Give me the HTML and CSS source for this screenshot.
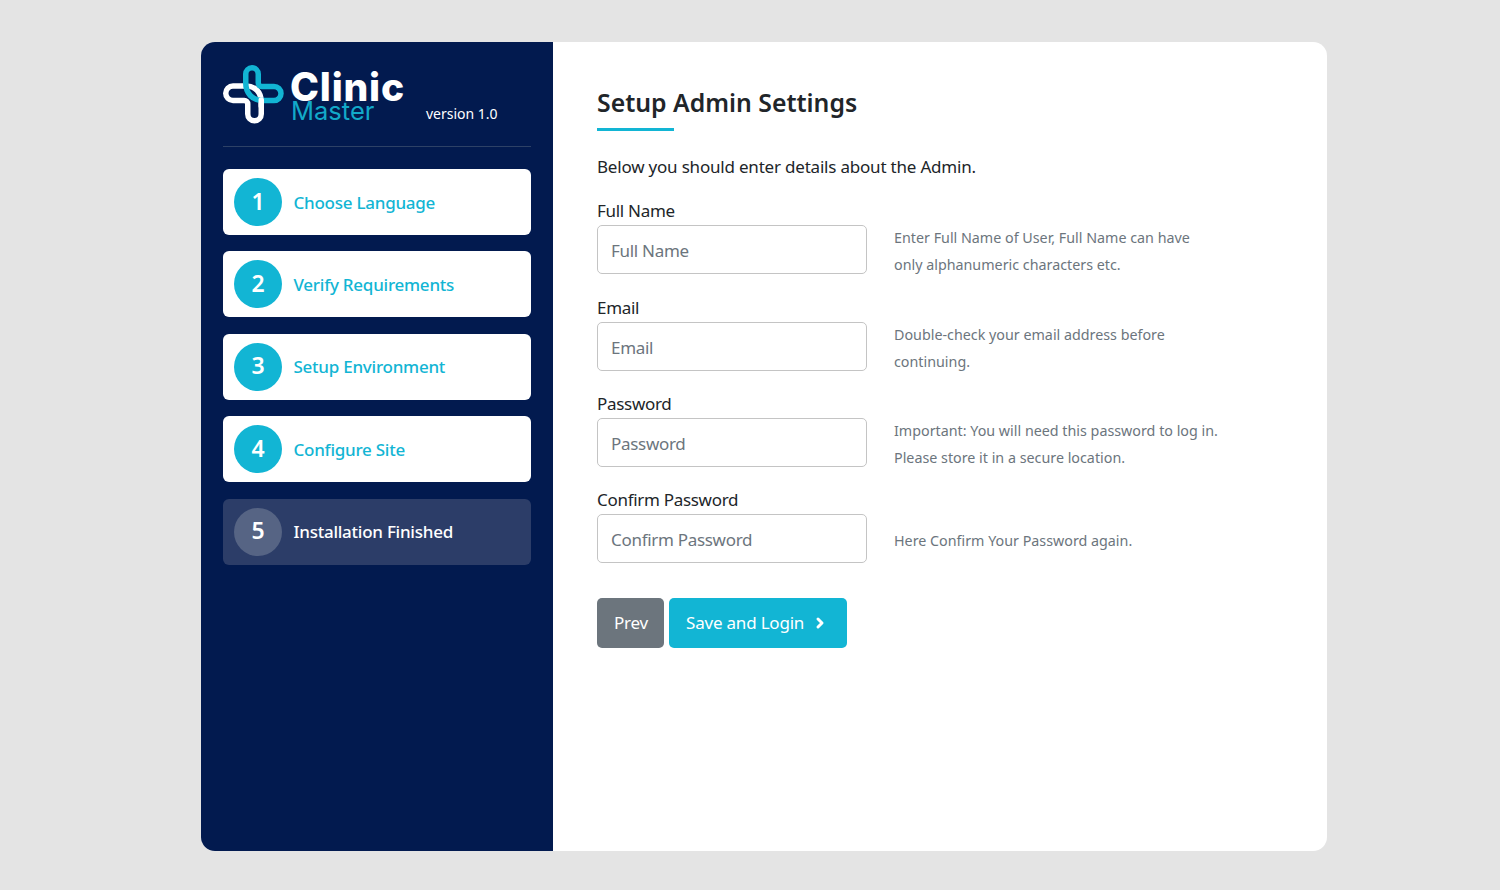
FILE: index.html
```html
<!DOCTYPE html>
<html lang="en">
<head>
<meta charset="utf-8">
<title>Setup Admin Settings</title>
<link rel="stylesheet" href="styles.css">
</head>
<body>
<main class="card">
  <aside class="sidebar">
    <header class="brand">
      <svg class="logo-icon" viewBox="0 0 60 58" width="60" height="58" fill="none" stroke-width="5.500" stroke-linecap="round" stroke-linejoin="round">
        <path stroke="#fff" d="M10 21H23C32 21 38.250 27 38.250 37V49a6.750 6.750 0 0 1-13.500 0V39a3.500 3.500 0 0 0-3.500-3.500H10a7.250 7.250 0 0 1 0-14.500Z"/>
        <path stroke="#12b5d4" d="M22.750 9a6.250 6.250 0 0 1 12.500 0V18a3.500 3.500 0 0 0 3.500 3.500H51a7 7 0 0 1 0 14H40C29 35.500 22.750 28 22.750 18Z"/>
        <path stroke="#fff" d="M38.250 35V41"/>
      </svg>
      <div class="wordmark">
        <span class="wordmark-main">Clinic</span>
        <span class="wordmark-sub">Master</span>
      </div>
      <span class="version">version 1.0</span>
    </header>
    <nav class="steps">
      <a class="step"><span class="step-num">1</span><span class="step-label">Choose Language</span></a>
      <a class="step"><span class="step-num">2</span><span class="step-label">Verify Requirements</span></a>
      <a class="step"><span class="step-num">3</span><span class="step-label">Setup Environment</span></a>
      <a class="step"><span class="step-num">4</span><span class="step-label">Configure Site</span></a>
      <a class="step step-pending"><span class="step-num">5</span><span class="step-label">Installation Finished</span></a>
    </nav>
  </aside>
  <section class="content">
    <h1 class="title">Setup Admin Settings</h1>
    <p class="intro">Below you should enter details about the Admin.</p>
    <form class="form">
      <div class="field">
        <label class="field-label">Full Name</label>
        <div class="field-row">
          <input class="input" type="text" placeholder="Full Name">
          <p class="hint">Enter Full Name of User, Full Name can have only alphanumeric characters etc.</p>
        </div>
      </div>
      <div class="field">
        <label class="field-label">Email</label>
        <div class="field-row">
          <input class="input" type="text" placeholder="Email">
          <p class="hint">Double-check your email address before continuing.</p>
        </div>
      </div>
      <div class="field">
        <label class="field-label">Password</label>
        <div class="field-row">
          <input class="input" type="text" placeholder="Password">
          <p class="hint">Important: You will need this password to log in. Please store it in a secure location.</p>
        </div>
      </div>
      <div class="field">
        <label class="field-label">Confirm Password</label>
        <div class="field-row">
          <input class="input" type="text" placeholder="Confirm Password">
          <p class="hint">Here Confirm Your Password again.</p>
        </div>
      </div>
      <div class="actions">
        <button class="btn btn-prev" type="button">Prev</button>
        <button class="btn btn-save" type="button">Save and Login
          <svg class="chevron" viewBox="0 0 10 14" width="10" height="14" fill="none" stroke="#fff" stroke-width="3" stroke-linecap="round" stroke-linejoin="round"><path d="M3 3 7 7l-4 4"/></svg>
        </button>
      </div>
    </form>
  </section>
</main>
</body>
</html>
```
FILE: styles.css
```css
* { box-sizing: border-box; }
html, body { height: 100%; }
body {
  margin: 0;
  background: #e4e4e4;
  font-family: "Noto Sans", "Open Sans", "Liberation Sans", sans-serif;
  color: #212529;
  padding: 42px 173px 39px 201px;
}
.card {
  display: flex;
  width: 1126px;
  height: 809px;
  background: #fff;
  border-radius: 14px;
  overflow: hidden;
}
.sidebar {
  width: 352px;
  flex: none;
  background: #021a4f;
  padding: 0 22px;
}
.brand {
  height: 105px;
  border-bottom: 1px solid #2d4166;
  display: flex;
  padding-top: 23px;
}
.logo-icon { flex: none; overflow: visible; }
.wordmark {
  display: flex;
  flex-direction: column;
  margin-left: 7px;
  margin-top: 3.500px;
}
.wordmark-main {
  font-family: Inter, "Liberation Sans", sans-serif;
  font-weight: 800;
  font-size: 39px;
  line-height: 36px;
  letter-spacing: 0.800px;
  color: #fff;
}
.wordmark-sub {
  font-family: Inter, "Liberation Sans", sans-serif;
  font-weight: 400;
  font-size: 25.500px;
  line-height: 11px;
  color: #12a9c9;
  margin-left: 1px;
}
.version {
  color: #fff;
  font-size: 14px;
  line-height: 20px;
  margin-left: 21px;
  margin-top: 39px;
}
.steps {
  display: flex;
  flex-direction: column;
  gap: 16.400px;
  margin-top: 22px;
}
.step {
  display: flex;
  align-items: center;
  height: 66px;
  background: #fff;
  border-radius: 6px;
  padding-left: 11px;
  gap: 11.500px;
}
.step-num {
  width: 48px;
  height: 48px;
  flex: none;
  border-radius: 50%;
  background: #12b5d4;
  color: #fff;
  font-size: 23px;
  font-weight: 600;
  display: flex;
  align-items: center;
  justify-content: center;
  padding-bottom: 3px;
}
.step-label {
  color: #12b5d4;
  font-size: 17px;
  font-weight: 500;
  letter-spacing: -0.250px;
}
.step-pending { background: #2c3d68; }
.step-pending .step-num { background: #566484; }
.step-pending .step-label { color: #fff; }
.content {
  flex: 1;
  padding: 0 44px;
}
.title {
  display: inline-block;
  margin: 43px 0 0;
  font-size: 24.800px;
  font-weight: 600;
  line-height: 34px;
  color: #212529;
  position: relative;
  padding-bottom: 12px;
}
.title::after {
  content: "";
  position: absolute;
  left: 0;
  bottom: 0;
  width: 77px;
  height: 3px;
  background: #12b5d4;
}
.intro {
  margin: 23px 0 0;
  font-size: 17px;
  line-height: 26px;
  letter-spacing: -0.2px;
}
.form { margin-top: 18.400px; }
.field { margin-bottom: 20.300px; }
.field-label {
  display: block;
  font-size: 17px;
  line-height: 26px;
  margin-bottom: 1px;
  letter-spacing: -0.3px;
}
.field-row {
  display: flex;
  align-items: center;
  gap: 27px;
  height: 49px;
}
.input {
  width: 270px;
  height: 49px;
  flex: none;
  border: 1px solid #c4c4c4;
  border-radius: 5px;
  padding: 2px 13px 0;
  font: inherit;
  font-size: 17px;
  letter-spacing: -0.3px;
  color: #6c757d;
  background: #fff;
}
.input::placeholder { color: #6c757d; opacity: 1; }
.hint {
  margin: 0;
  padding-top: 3px;
  width: 326px;
  font-size: 14.300px;
  line-height: 27px;
  color: #6c757d;
}
.actions {
  display: flex;
  gap: 5px;
  margin-top: 35px;
}
.btn {
  height: 50px;
  border: 0;
  border-radius: 5px;
  color: #fff;
  font: inherit;
  font-size: 17px;
  letter-spacing: -0.2px;
  padding: 0 17px 2px;
  display: flex;
  align-items: center;
}
.btn-prev { background: #6c757d; width: 67px; }
.btn-save { background: #12b5d4; gap: 11px; width: 178px; }
.chevron { margin-top: 2px; }
```
